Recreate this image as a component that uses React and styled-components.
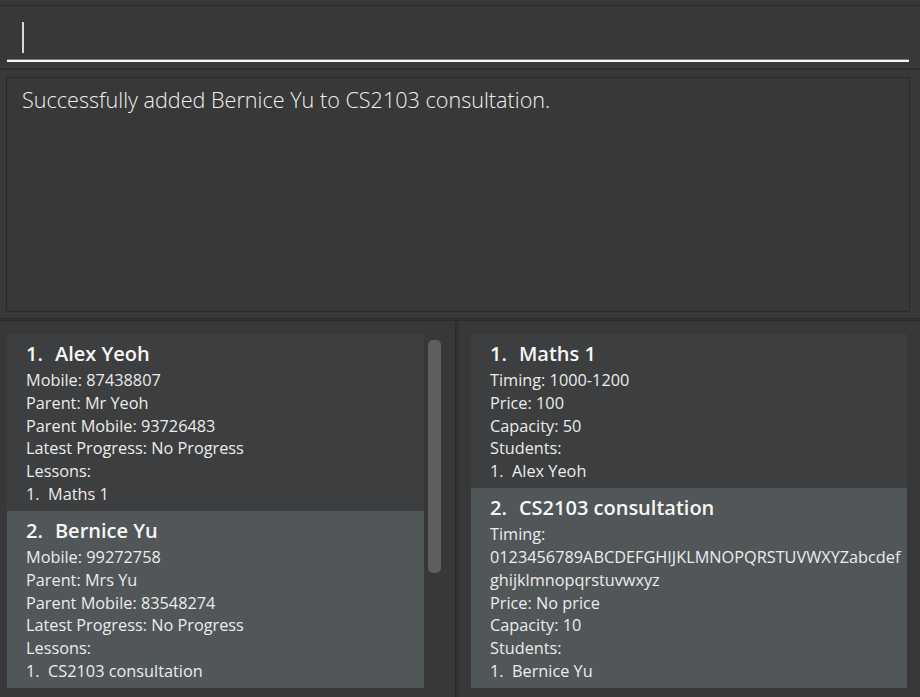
import React from "react";
import styled, { createGlobalStyle } from "styled-components";

const GlobalStyle = createGlobalStyle`
  html, body { margin: 0; padding: 0; background: #383838; overflow: hidden; }
  #root { width: 920px; height: 697px; }
  * { box-sizing: border-box; }
`;

const Window = styled.div`
  width: 920px;
  height: 697px;
  background: #383838;
  display: flex;
  flex-direction: column;
  font-family: "Open Sans", "Noto Sans", sans-serif;
  color: #f2f2f2;
`;

const TopStrip = styled.div`
  height: 6px;
  flex: none;
  border-bottom: 1px solid #2b2b2b;
`;

const CommandBox = styled.div`
  height: 64px;
  flex: none;
  padding: 16px 11px 0 7px;
  border-bottom: 2px solid #2d2d2d;
`;

const CommandField = styled.div`
  height: 40px;
  padding: 0 0 0 15px;
  border-bottom: 2px solid #f4f4f4;
  box-shadow: 0 -1px 0 0 #7a7a7a inset;
`;

const Caret = styled.div`
  width: 2px;
  height: 31px;
  background: #d8d8d8;
`;

const ResultWrap = styled.div`
  flex: none;
  padding: 7px 10px 6px 6px;
`;

const ResultBox = styled.div`
  height: 235px;
  border: 1px solid #2a2a2a;
  padding: 7px 15px;
  font-weight: 300;
  font-size: 21.6px;
  line-height: 29px;
  color: #f0f0f0;
`;

const HDivider = styled.div`
  flex: none;
  height: 3px;
  border-top: 1px solid #2b2b2b;
  border-bottom: 1px solid #2b2b2b;
  background: #333333;
`;

const Lists = styled.div`
  flex: 1;
  display: flex;
  min-height: 0;
`;

const LeftPane = styled.div`
  width: 455px;
  flex: none;
  padding: 13px 0 0 7px;
  display: flex;
  gap: 4px;
  overflow: hidden;
`;

const VDivider = styled.div`
  width: 3px;
  flex: none;
  border-left: 1px solid #2b2b2b;
  border-right: 1px solid #2b2b2b;
  background: #333333;
`;

const RightPane = styled.div`
  flex: 1;
  padding: 13px 13px 0 13px;
  overflow: hidden;
`;

const List = styled.div`
  width: ${(p) => p.$width}px;
  flex: none;
  display: flex;
  flex-direction: column;
`;

const ScrollTrack = styled.div`
  width: 13px;
  flex: none;
  padding-top: 6px;
`;

const Thumb = styled.div`
  height: 233px;
  border-radius: 5px;
  background: #5e5e5e;
`;

const Card = styled.div`
  background: ${(p) => (p.$alt ? "#515658" : "#3c3e3f")};
  padding: 5px 0 5.5px 19px;
`;

const Title = styled.div`
  display: flex;
  font-size: 20px;
  font-weight: 600;
  line-height: 30px;
  color: #f6f6f6;
  white-space: pre;
`;

const Index = styled.span`
  margin-right: 12px;
`;

const Line = styled.div`
  font-size: 16.3px;
  line-height: 22.75px;
  color: #ececec;
  white-space: pre;
`;

const students = [
  {
    name: "Alex Yeoh",
    mobile: "87438807",
    parent: "Mr Yeoh",
    parentMobile: "93726483",
    progress: "No Progress",
    lessons: ["Maths 1"],
  },
  {
    name: "Bernice Yu",
    mobile: "99272758",
    parent: "Mrs Yu",
    parentMobile: "83548274",
    progress: "No Progress",
    lessons: ["CS2103 consultation"],
  },
];

const lessons = [
  {
    name: "Maths 1",
    timing: ["Timing: 1000-1200"],
    price: "100",
    capacity: "50",
    students: ["Alex Yeoh"],
  },
  {
    name: "CS2103 consultation",
    timing: ["Timing:", "0123456789ABCDEFGHIJKLMNOPQRSTUVWXYZabcdef", "ghijklmnopqrstuvwxyz"],
    price: "No price",
    capacity: "10",
    students: ["Bernice Yu"],
  },
];

export default function App() {
  return (
    <>
      <GlobalStyle />
      <Window>
        <TopStrip />
        <CommandBox>
          <CommandField>
            <Caret />
          </CommandField>
        </CommandBox>
        <ResultWrap>
          <ResultBox>Successfully added Bernice Yu to CS2103 consultation.</ResultBox>
        </ResultWrap>
        <HDivider />
        <Lists>
          <LeftPane>
            <List $width={417}>
              {students.map((s, i) => (
                <Card key={s.name} $alt={i % 2 === 1}>
                  <Title>
                    <Index>{i + 1}.</Index>
                    {s.name}
                  </Title>
                  <Line>Mobile: {s.mobile}</Line>
                  <Line>Parent: {s.parent}</Line>
                  <Line>Parent Mobile: {s.parentMobile}</Line>
                  <Line>Latest Progress: {s.progress}</Line>
                  <Line>Lessons:</Line>
                  {s.lessons.map((l, j) => (
                    <Line key={l}>{`${j + 1}.  ${l}`}</Line>
                  ))}
                </Card>
              ))}
            </List>
            <ScrollTrack>
              <Thumb />
            </ScrollTrack>
          </LeftPane>
          <VDivider />
          <RightPane>
            <List $width={436}>
              {lessons.map((l, i) => (
                <Card key={l.name} $alt={i % 2 === 1}>
                  <Title>
                    <Index>{i + 1}.</Index>
                    {l.name}
                  </Title>
                  {l.timing.map((t) => (
                    <Line key={t}>{t}</Line>
                  ))}
                  <Line>Price: {l.price}</Line>
                  <Line>Capacity: {l.capacity}</Line>
                  <Line>Students:</Line>
                  {l.students.map((s, j) => (
                    <Line key={s}>{`${j + 1}.  ${s}`}</Line>
                  ))}
                </Card>
              ))}
            </List>
          </RightPane>
        </Lists>
      </Window>
    </>
  );
}
